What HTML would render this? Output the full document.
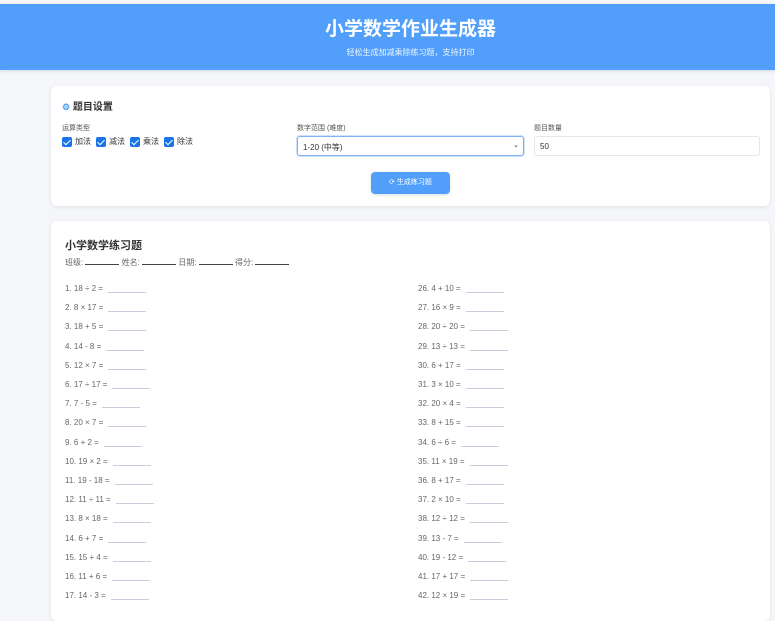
<!DOCTYPE html>
<html><head><meta charset="utf-8"><style>
*{box-sizing:border-box;margin:0;padding:0}
body{width:775px;height:612px;overflow:hidden;background:#f4f6fa;font-family:"Liberation Sans","Noto Sans CJK SC",sans-serif;color:#333;position:relative}
.hdr{position:absolute;left:0;top:4px;width:775px;height:66px;background:#519ffa;color:#fff;text-align:center;padding-left:46px;box-shadow:0 1px 3px rgba(0,0,0,.12)}
.hdr h1{font-size:19px;font-weight:bold;margin-top:14px;line-height:24px}
.hdr p{font-size:8px;margin-top:5px;opacity:.9}
.card{position:absolute;left:51px;width:719px;background:#fff;border-radius:6px;box-shadow:0 1px 4px rgba(0,0,0,.08)}
.lbl{position:absolute;font-size:7px;color:#555}
.cb{display:inline-block;width:10px;height:10px;background:#1a73e8;border-radius:2px;vertical-align:middle;position:relative;margin-right:3px}
.cb:after{content:"";position:absolute;left:3px;top:1px;width:3px;height:6px;border:solid #fff;border-width:0 1.5px 1.5px 0;transform:rotate(45deg)}
.ops{position:absolute;left:11px;top:50px;font-size:8px;color:#333}
.ops span{margin-right:5px;vertical-align:middle}
.q{position:absolute;font-size:8px;color:#666;white-space:nowrap}
.q i{display:inline-block;width:38px;border-bottom:1px solid #ccd;margin-left:5px;vertical-align:-2px}
</style></head><body>
<div class="hdr"><h1>小学数学作业生成器</h1><p>轻松生成加减乘除练习题，支持打印</p></div>
<div class="card" style="top:86px;height:120px">
 <div style="position:absolute;left:11px;top:12px;font-size:10px;font-weight:bold;color:#333"><span style="color:#519ffa;font-size:9px">⚙</span> 题目设置</div>
 <div class="lbl" style="left:11px;top:37px">运算类型</div>
 <div class="ops"><i class="cb"></i><span>加法</span><i class="cb"></i><span>减法</span><i class="cb"></i><span>乘法</span><i class="cb"></i><span>除法</span></div>
 <div class="lbl" style="left:246px;top:37px">数字范围 (难度)</div>
 <div style="position:absolute;left:246px;top:50px;width:227px;height:20px;border:1px solid #7fb0f5;border-radius:3px;font-size:8px;padding:5px 5px;box-shadow:0 0 0 1px #cfe2fc">1-20 (中等)<span style="position:absolute;right:4px;top:4px;font-size:7px">⌄</span></div>
 <div class="lbl" style="left:483px;top:37px">题目数量</div>
 <div style="position:absolute;left:483px;top:50px;width:226px;height:20px;border:1px solid #e5e7ea;border-radius:3px;font-size:8px;padding:5px 5px">50</div>
 <div style="position:absolute;left:320px;top:86px;width:79px;height:22px;background:#519ffa;border-radius:4px;color:#fff;font-size:7px;text-align:center;line-height:22px;box-shadow:0 1px 3px rgba(0,0,0,.15)">⟳ 生成练习题</div>
</div>
<div class="card" style="top:221px;height:400px">
 <div style="position:absolute;left:14px;top:16px;font-size:11px;font-weight:bold;color:#333">小学数学练习题</div>
 <div style="position:absolute;left:14px;top:36px;font-size:8px;color:#666;white-space:nowrap">班级: <i style="display:inline-block;width:34px;border-bottom:1px solid #444"></i> 姓名: <i style="display:inline-block;width:34px;border-bottom:1px solid #444"></i> 日期: <i style="display:inline-block;width:34px;border-bottom:1px solid #444"></i> 得分: <i style="display:inline-block;width:34px;border-bottom:1px solid #444"></i></div>
</div>
<div id="qs"></div>
<script>
var L=["18 ÷ 2","8 × 17","18 + 5","14 - 8","12 × 7","17 ÷ 17","7 - 5","20 × 7","6 + 2","19 × 2","19 - 18","11 ÷ 11","8 × 18","6 + 7","15 + 4","11 + 6","14 - 3"];
var R=["4 + 10","16 × 9","20 ÷ 20","13 ÷ 13","6 + 17","3 × 10","20 × 4","8 + 15","6 ÷ 6","11 × 19","8 + 17","2 × 10","12 ÷ 12","13 - 7","19 - 12","17 + 17","12 × 19"];
var h="";for(var k=0;k<17;k++){var y=284+k*19.2;
h+='<div class="q" style="left:65px;top:'+y+'px">'+(k+1)+'. '+L[k]+' =<i></i></div>';
h+='<div class="q" style="left:418px;top:'+y+'px">'+(k+26)+'. '+R[k]+' =<i></i></div>';}
document.getElementById("qs").innerHTML=h;
</script>
</body></html>
